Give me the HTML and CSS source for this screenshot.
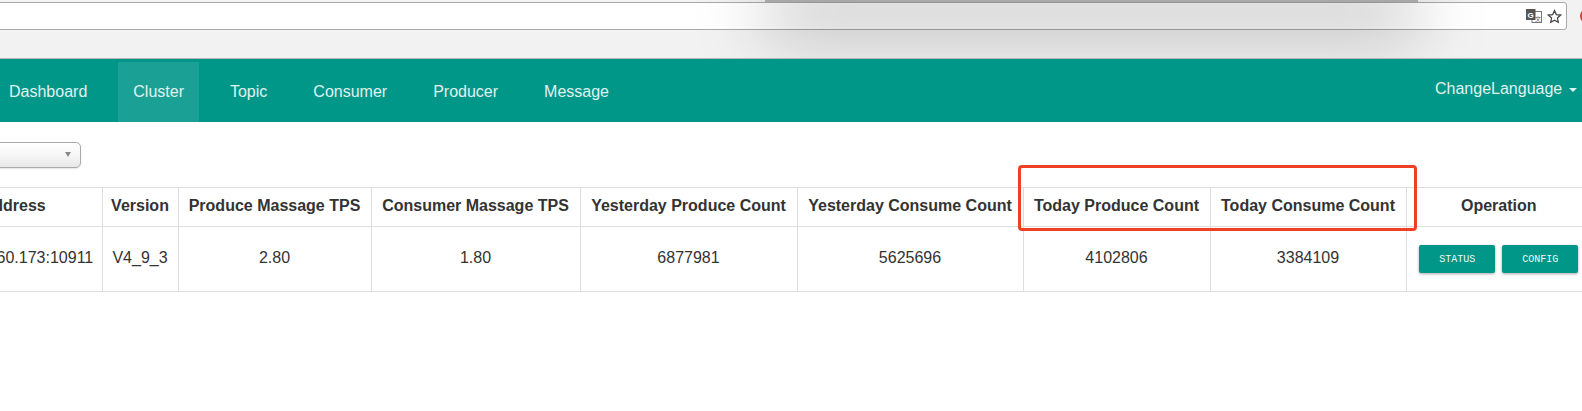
FILE: index.html
```html
<!DOCTYPE html>
<html lang="en">
<head>
<meta charset="utf-8">
<title>Cluster</title>
<link rel="stylesheet" href="styles.css">
</head>
<body>
<div class="chrome">
  <div class="urlbar">
    <svg class="translate" width="16" height="14" viewBox="0 0 16 14"><rect x="6" y="2.5" width="9.5" height="11" fill="#fff" stroke="#777"/><rect x="0" y="0" width="9.5" height="11" fill="#555"/><text x="1.5" y="8.5" class="glyph-g">G</text><text x="9" y="11.5" class="glyph-k">文</text></svg>
    <svg class="star" width="15" height="15" viewBox="0 0 24 24"><path d="M12 2.5l2.9 6.4 7 .8-5.2 4.7 1.4 6.9-6.1-3.5-6.1 3.5 1.4-6.9-5.2-4.7 7-.8z" fill="none" stroke="#444" stroke-width="2"/></svg>
  </div>
  <span class="ext-dot"></span>
  <div class="window-shadow"></div>
</div>
<nav class="nav">
  <a class="nav-link">Dashboard</a>
  <a class="nav-link active">Cluster</a>
  <a class="nav-link">Topic</a>
  <a class="nav-link">Consumer</a>
  <a class="nav-link">Producer</a>
  <a class="nav-link">Message</a>
  <a class="nav-lang">ChangeLanguage <span class="caret"></span></a>
</nav>
<main class="content">
  <div class="select"><span class="select-arrow"></span></div>
  <table class="table">
    <colgroup>
      <col class="c-addr"><col class="c-ver"><col class="c-ptps"><col class="c-ctps"><col class="c-ypc"><col class="c-ycc"><col class="c-tpc"><col class="c-tcc"><col class="c-op">
    </colgroup>
    <thead>
      <tr>
        <th>Address</th><th>Version</th><th>Produce Massage TPS</th><th>Consumer Massage TPS</th><th>Yesterday Produce Count</th><th>Yesterday Consume Count</th><th>Today Produce Count</th><th>Today Consume Count</th><th>Operation</th>
      </tr>
    </thead>
    <tbody>
      <tr>
        <td>172.17.160.173:10911</td><td>V4_9_3</td><td>2.80</td><td>1.80</td><td>6877981</td><td>5625696</td><td>4102806</td><td>3384109</td>
        <td><div class="ops"><button class="btn">STATUS</button><button class="btn">CONFIG</button></div></td>
      </tr>
    </tbody>
  </table>
</main>
<div class="annotation"></div>
</body>
</html>
```
FILE: styles.css
```css
* { box-sizing: border-box; }
html, body { margin: 0; height: 100%; overflow: hidden; background: #fff; }
body { font-family: "Liberation Sans", Arial, sans-serif; color: #333; position: relative; }

.chrome { height: 59px; padding-top: 2px; background: #f2f2f2; border-bottom: 1px solid #b4b4b4; position: relative; overflow: hidden; }
.urlbar {
  height: 28px; width: 1571px; margin-left: -4px;
  background: #fff; border: 1px solid #a9a9a9; border-radius: 0 3px 3px 0;
  display: flex; align-items: center; justify-content: flex-end; gap: 5px; padding-right: 4px;
}
.translate { display: block; }
.glyph-g { font: bold 8px "Liberation Sans", sans-serif; fill: #fff; }
.glyph-k { font: 6px "Noto Sans CJK SC", sans-serif; fill: #555; }
.star { display: block; }
.ext-dot { position: absolute; left: 1580px; top: 9px; width: 14px; height: 14px; border-radius: 50%; background: #d33b2c; }
.window-shadow {
  position: absolute; left: 765px; top: -30px; width: 653px; height: 32px;
  background: #a8a8a8; box-shadow: 0 25px 70px rgba(0, 0, 0, .36);
}

.nav { height: 63px; padding-top: 3px; background: #009688; display: flex; gap: 16px; margin-left: -6px; position: relative; }
.nav-link { padding: 0 15px; line-height: 59px; font-size: 16px; color: #e0f2f1; }
.nav-link.active { background: rgba(255, 255, 255, .1); }
.nav-lang { margin-left: auto; width: 147px; flex: none; line-height: 53px; font-size: 16px; color: #e0f2f1; white-space: nowrap; }
.caret { display: inline-block; margin-left: 2px; vertical-align: middle; border-top: 4px solid #e0f2f1; border-left: 4px solid transparent; border-right: 4px solid transparent; }

.content { padding-top: 20px; overflow: hidden; }
.select {
  width: 101px; height: 26px; margin-left: -20px; position: relative;
  background: linear-gradient(#fff, #f6f6f6 50%, #e8e8e8); border: 1px solid #aaa; border-radius: 5px;
  box-shadow: 0 1px 2px rgba(0, 0, 0, .1);
}
.select-arrow { position: absolute; right: 9px; top: 9px; border-top: 5px solid #888; border-left: 3.5px solid transparent; border-right: 3.5px solid transparent; }

.table { table-layout: fixed; width: 1666px; margin: 19px 0 0 -75px; border-collapse: collapse; font-size: 16px; }
.c-addr { width: 176.5px; } .c-ver { width: 76px; } .c-ptps { width: 193px; } .c-ctps { width: 209px; }
.c-ypc { width: 217px; } .c-ycc { width: 226px; } .c-tpc { width: 187px; } .c-tcc { width: 196px; } .c-op { width: 185.5px; }
.table th, .table td { border: 1px solid #ddd; padding: 0 4px 2px; text-align: center; white-space: nowrap; color: #333; }
.table th { height: 39px; font-weight: 700; }
.table td { height: 65px; }
.table td:last-child { padding-bottom: 0; }
.ops { display: flex; justify-content: center; gap: 7px; }
.btn {
  width: 76px; height: 28px; padding: 0; border: 0; border-radius: 2px;
  background: #009688; color: #f0faf8; font: 10px "Liberation Mono", monospace;
  box-shadow: 0 1px 3px rgba(0, 0, 0, .35);
}

.annotation { position: absolute; left: 1018px; top: 165px; width: 399px; height: 66px; border: 3px solid #ef4023; border-radius: 4px; }
```
